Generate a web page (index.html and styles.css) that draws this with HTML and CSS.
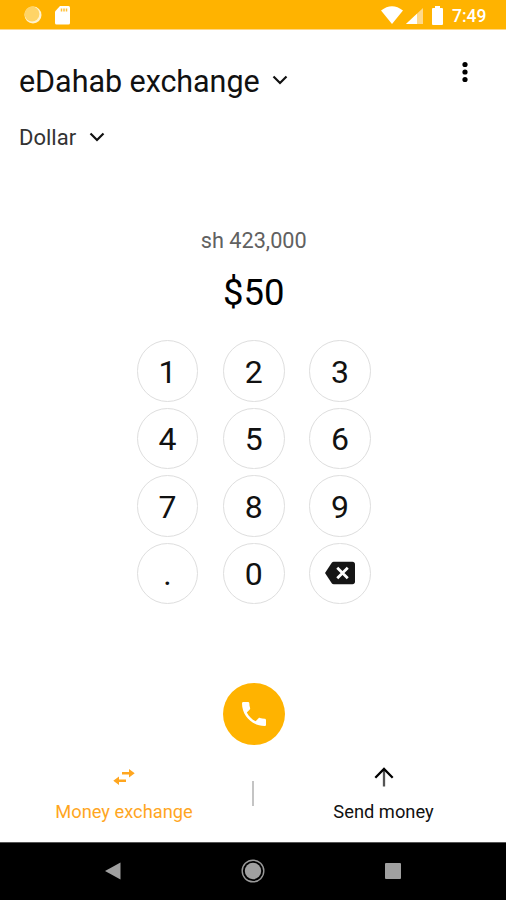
FILE: index.html
```html
<!DOCTYPE html>
<html lang="en">
<head>
<meta charset="utf-8">
<title>eDahab exchange</title>
<link rel="stylesheet" href="styles.css">
</head>
<body>
<div class="screen">
  <header class="status">
    <svg class="sync" width="18" height="18" viewBox="0 0 18 18"><circle cx="9" cy="9" r="8.500" fill="#fff3cf"/><circle cx="8" cy="8" r="7.400" fill="#ffd467"/></svg>
    <svg class="sd" width="16" height="19" viewBox="0 0 16 19"><path fill="#fff" d="M5 0h8.500q1.500 0 1.500 1.500v15.500q0 1.500-1.500 1.500h-12q-1.500 0-1.500-1.500V5.500z"/><path stroke="#ffbf35" stroke-width="1.500" d="M6.500 2.500v3M9 2.500v3M11.500 2.500v3"/></svg>
    <div class="status-right">
      <svg class="wifi" width="22" height="18" viewBox="0 0 22 18"><path fill="#fff" d="M0 4.500Q11-4 22 4.500L11 18z"/></svg>
      <svg class="signal" width="17" height="16" viewBox="0 0 17 16"><path fill="#ffd98a" d="M17 0v16H0z"/><path fill="#fff" d="M11 5.650V16H0z"/></svg>
      <svg class="battery" width="11" height="19" viewBox="0 0 11 19"><path fill="#fff" d="M3 0h5v2h2q1 0 1 1v15q0 1-1 1H1q-1 0-1-1V3q0-1 1-1h2z"/></svg>
      <span class="clock">7:49</span>
    </div>
  </header>
  <main class="content">
    <div class="title-row">
      <h1 class="title">eDahab exchange</h1>
      <svg class="chevron" width="16" height="10" viewBox="0 0 16 10"><path d="M1.500 1.500L8 8l6.500-6.500"/></svg>
      <svg class="more" width="6" height="22" viewBox="0 0 6 22"><circle cx="3" cy="3.500" r="2.600"/><circle cx="3" cy="11" r="2.600"/><circle cx="3" cy="18.500" r="2.600"/></svg>
    </div>
    <div class="currency">
      <span class="currency-name">Dollar</span>
      <svg class="chevron" width="16" height="10" viewBox="0 0 16 10"><path d="M1.500 1.500L8 8l6.500-6.500"/></svg>
    </div>
    <div class="exchange">
      <div class="converted">sh 423,000</div>
      <div class="amount">$50</div>
      <div class="keypad">
        <div class="key">1</div><div class="key">2</div><div class="key">3</div>
        <div class="key">4</div><div class="key">5</div><div class="key">6</div>
        <div class="key">7</div><div class="key">8</div><div class="key">9</div>
        <div class="key">.</div><div class="key">0</div>
        <div class="key"><svg class="erase" width="30" height="30" viewBox="0 0 24 24"><path fill="#151515" d="M22 3H7c-.69 0-1.230.350-1.590.880L0 12l5.410 8.110c.360.530.9.890 1.590.890h15c1.100 0 2-.9 2-2V5c0-1.100-.9-2-2-2z"/><path stroke="#fff" stroke-width="2.200" d="M9.800 7.800l8.400 8.400M18.200 7.800l-8.400 8.400"/></svg></div>
      </div>
      <div class="call"><svg width="32" height="32" viewBox="0 0 24 24"><path fill="#fff" d="M6.620 10.790c1.440 2.830 3.760 5.140 6.590 6.590l2.200-2.200c.270-.270.670-.360 1.020-.240 1.120.370 2.330.570 3.570.570.550 0 1 .450 1 1V20c0 .550-.450 1-1 1-9.390 0-17-7.610-17-17 0-.550.450-1 1-1h3.500c.550 0 1 .450 1 1 0 1.250.2 2.450.570 3.570.110.350.030.740-.250 1.020l-2.200 2.200z"/></svg></div>
    </div>
    <nav class="tabs">
      <div class="tab active">
        <svg width="22" height="20" viewBox="0 0 22 20"><path fill="#ffa61f" d="M16 2l5.700 4.200L16 10.400V7.400H9V5h7zM6 9.600v3h7V15H6v3L.300 13.800z"/></svg>
        <span>Money exchange</span>
      </div>
      <div class="divider"></div>
      <div class="tab">
        <svg width="20" height="20" viewBox="0 0 20 20"><path fill="none" stroke="#555" stroke-width="2.300" d="M10 2.500v17"/><path fill="none" stroke="#000" stroke-width="2.300" d="M1.300 10.700L10 2l8.700 8.700"/></svg>
        <span>Send money</span>
      </div>
    </nav>
  </main>
  <footer class="system">
    <svg width="16" height="18" viewBox="0 0 16 18"><path fill="#a0a0a0" d="M15.500.500v17L0 9z"/></svg>
    <svg width="24" height="24" viewBox="0 0 24 24"><circle cx="12" cy="12" r="10.800" fill="none" stroke="#999" stroke-width="1.400"/><circle cx="12" cy="12" r="8.200" fill="#a0a0a0"/></svg>
    <svg width="16" height="16" viewBox="0 0 16 16"><rect width="16" height="16" rx="1" fill="#a0a0a0"/></svg>
  </footer>
</div>
</body>
</html>
```
FILE: styles.css
```css
* { box-sizing: border-box; }
body { margin: 0; font-family: Roboto, sans-serif; color: #111; background: #fff; }
svg { display: block; flex: none; }
.screen { width: 506px; height: 900px; display: flex; flex-direction: column; overflow: hidden; }
.status { height: 30px; flex: none; display: flex; align-items: flex-start; background: #ffb300; border-bottom: 1px solid #ffd787; padding-left: 24px; }
.sync { margin-top: 6px; }
.sd { margin: 6px 0 0 13px; }
.status-right { margin-left: auto; width: 125px; display: flex; align-items: flex-start; }
.wifi { margin-top: 6px; }
.signal { margin: 8px 0 0 3px; }
.battery { margin: 6px 0 0 9px; }
.clock { margin-left: 9px; font-size: 17.5px; line-height: 32px; height: 29px; font-weight: 500; color: #fff; }
.content { flex: 1; display: flex; flex-direction: column; }
.title-row { height: 76px; padding: 31px 38px 0 19px; display: flex; align-items: flex-start; }
.title { margin: 0; font-size: 30.5px; font-weight: 400; line-height: 42px; letter-spacing: -0.05px; white-space: nowrap; }
.chevron { fill: none; stroke: #111; stroke-width: 2.200; }
.title-row .chevron { margin: 14px 0 0 12px; }
.more { margin: 0 0 0 auto; fill: #000; }
.currency { height: 62px; padding: 1px 0 0 19px; display: flex; align-items: center; gap: 13px; }
.currency-name { font-size: 22px; line-height: 30px; color: #333; }
.currency .chevron { margin-top: -1px; }
.exchange { display: flex; flex-direction: column; align-items: center; padding-left: 1.500px; }
.converted { margin-top: 57px; height: 30px; line-height: 31px; font-size: 21.700px; color: #616161; }
.amount { margin-top: 14px; height: 46px; line-height: 47px; font-size: 36.500px; color: #000; }
.keypad { margin-top: 25px; display: grid; grid-template-columns: repeat(3, 61.500px); grid-auto-rows: 61.500px; gap: 6px 24.800px; }
.key { border: 1px solid #dedede; border-radius: 50%; display: flex; align-items: center; justify-content: center; font-size: 32px; line-height: 38px; padding-top: 2px; }
.erase { margin-top: -2px; }
.call { width: 62px; height: 62px; margin-top: 78.500px; border-radius: 50%; background: #ffb300; display: flex; align-items: center; justify-content: center; }
.tabs { margin-top: 22px; display: grid; grid-template-columns: 247px 12px 249px; justify-items: center; }
.tab { display: flex; flex-direction: column; align-items: center; gap: 12px; font-size: 18.300px; line-height: 26px; color: #111; white-space: nowrap; }
.active { color: #ffa61f; padding-left: 1px; }
.divider { width: 2px; height: 25px; margin-top: 14px; background: #c4c4c4; }
.system { height: 58px; flex: none; padding-bottom: 2px; background: #000; border-top: 1px solid #555; display: grid; grid-template-columns: 226px 54px 226px; align-items: center; justify-items: center; }
```
